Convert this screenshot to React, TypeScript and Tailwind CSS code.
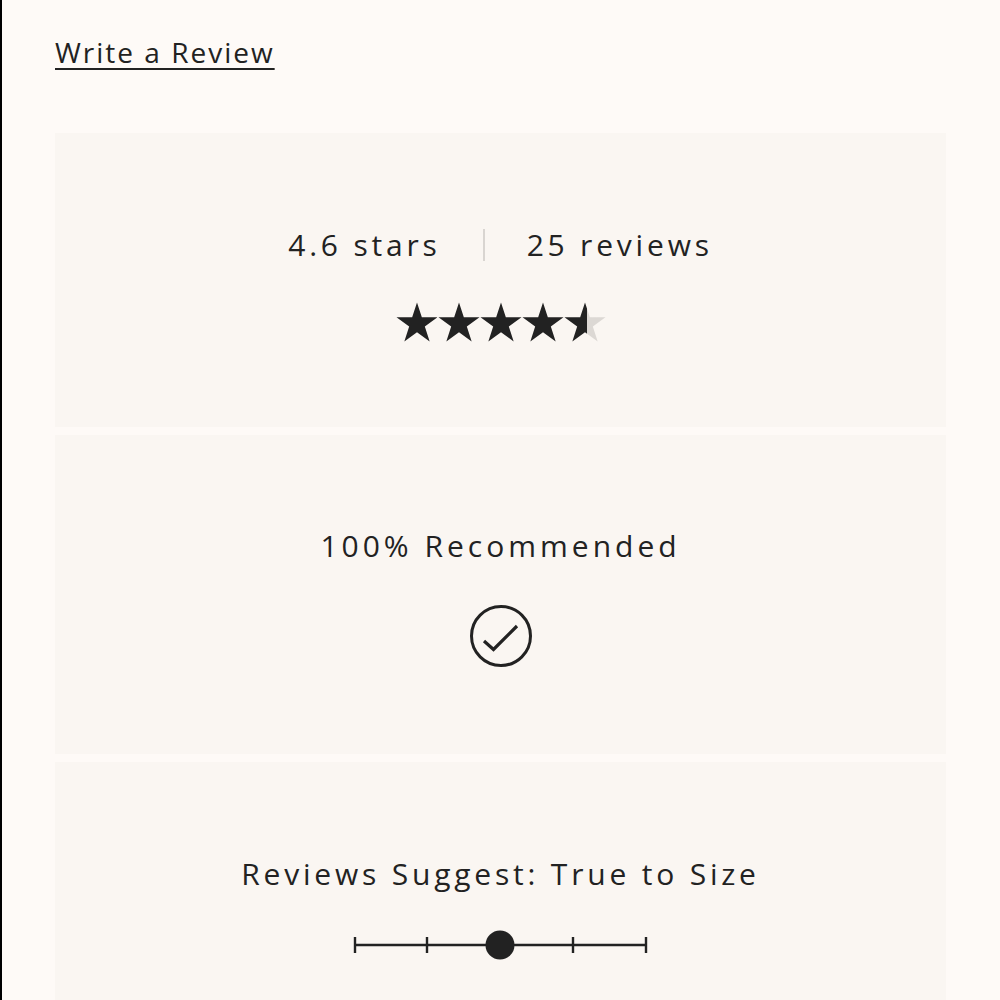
import React from 'react';

const STAR_PATH =
  'M21 0.45L25.84 15.34L41.5 15.34L28.83 24.54L33.67 39.43L21 30.23L8.33 39.43L13.17 24.54L0.5 15.34L16.16 15.34Z';

const Star: React.FC<{ fill: number; id: string }> = ({ fill, id }) => (
  <svg viewBox="0 0 42 40" className="w-[42px] h-[40px]">
    <defs>
      <linearGradient id={id} x1="0" x2="1" y1="0" y2="0">
        <stop offset={fill} stopColor="#222" />
        <stop offset={fill} stopColor="#dcd8d4" />
      </linearGradient>
    </defs>
    <path fill={`url(#${id})`} d={STAR_PATH} />
  </svg>
);

const Stars: React.FC<{ rating: number }> = ({ rating }) => (
  <div className="flex items-center">
    {[0, 1, 2, 3, 4].map((i) => (
      <Star key={i} id={`star-${i}`} fill={Math.max(0, Math.min(1, rating - i))} />
    ))}
  </div>
);

const CheckCircle = () => (
  <svg viewBox="0 0 64 64" className="w-[64px] h-[64px]">
    <circle cx="32" cy="32" r="29.5" fill="none" stroke="#222" strokeWidth="3" />
    <path d="M15 37l9.5 8.5L48 22" fill="none" stroke="#222" strokeWidth="3.2" strokeLinecap="butt" />
  </svg>
);

const FitScale = () => (
  <svg viewBox="0 0 296 32" className="w-[296px] h-[32px]">
    <line x1="2" y1="16" x2="294" y2="16" stroke="#222" strokeWidth="2.4" />
    {[2, 74, 220, 293].map((x) => (
      <line key={x} x1={x} y1="8" x2={x} y2="24" stroke="#222" strokeWidth="2.4" />
    ))}
    <circle cx="147" cy="16" r="14.5" fill="#222" />
  </svg>
);

export default function App() {
  return (
    <div className="min-h-screen bg-[#fefaf7] border-l-2 border-black text-[#222] font-['Open_Sans',sans-serif] pl-[53px] pr-[54px]">
      <div className="pt-[36px] h-[133px]">
        <a href="#" className="text-[28px] leading-[32px] tracking-[2px] underline underline-offset-[5px] decoration-2">
          Write a Review
        </a>
      </div>

      <div className="flex flex-col gap-2">
        <section className="bg-[#faf6f2] pt-[96px] pb-[85px] flex flex-col items-center">
          <div className="flex items-center text-[30px] leading-[32px] tracking-[3.8px]">
            <span>4.6 stars</span>
            <span className="w-[2px] h-[32px] bg-[#d9d5d1] mx-[42px]" />
            <span>25 reviews</span>
          </div>
          <div className="mt-[41px]">
            <Stars rating={4.56} />
          </div>
        </section>

        <section className="bg-[#faf6f2] pt-[95px] pb-[86px] flex flex-col items-center">
          <h3 className="text-[30px] leading-[32px] tracking-[4px]">100% Recommended</h3>
          <div className="mt-[42px]">
            <CheckCircle />
          </div>
        </section>

        <section className="bg-[#faf6f2] pt-[96px] pb-[80px] flex flex-col items-center">
          <h3 className="text-[30px] leading-[32px] tracking-[3.8px]">Reviews Suggest: True to Size</h3>
          <div className="mt-[39px]">
            <FitScale />
          </div>
        </section>
      </div>
    </div>
  );
}
